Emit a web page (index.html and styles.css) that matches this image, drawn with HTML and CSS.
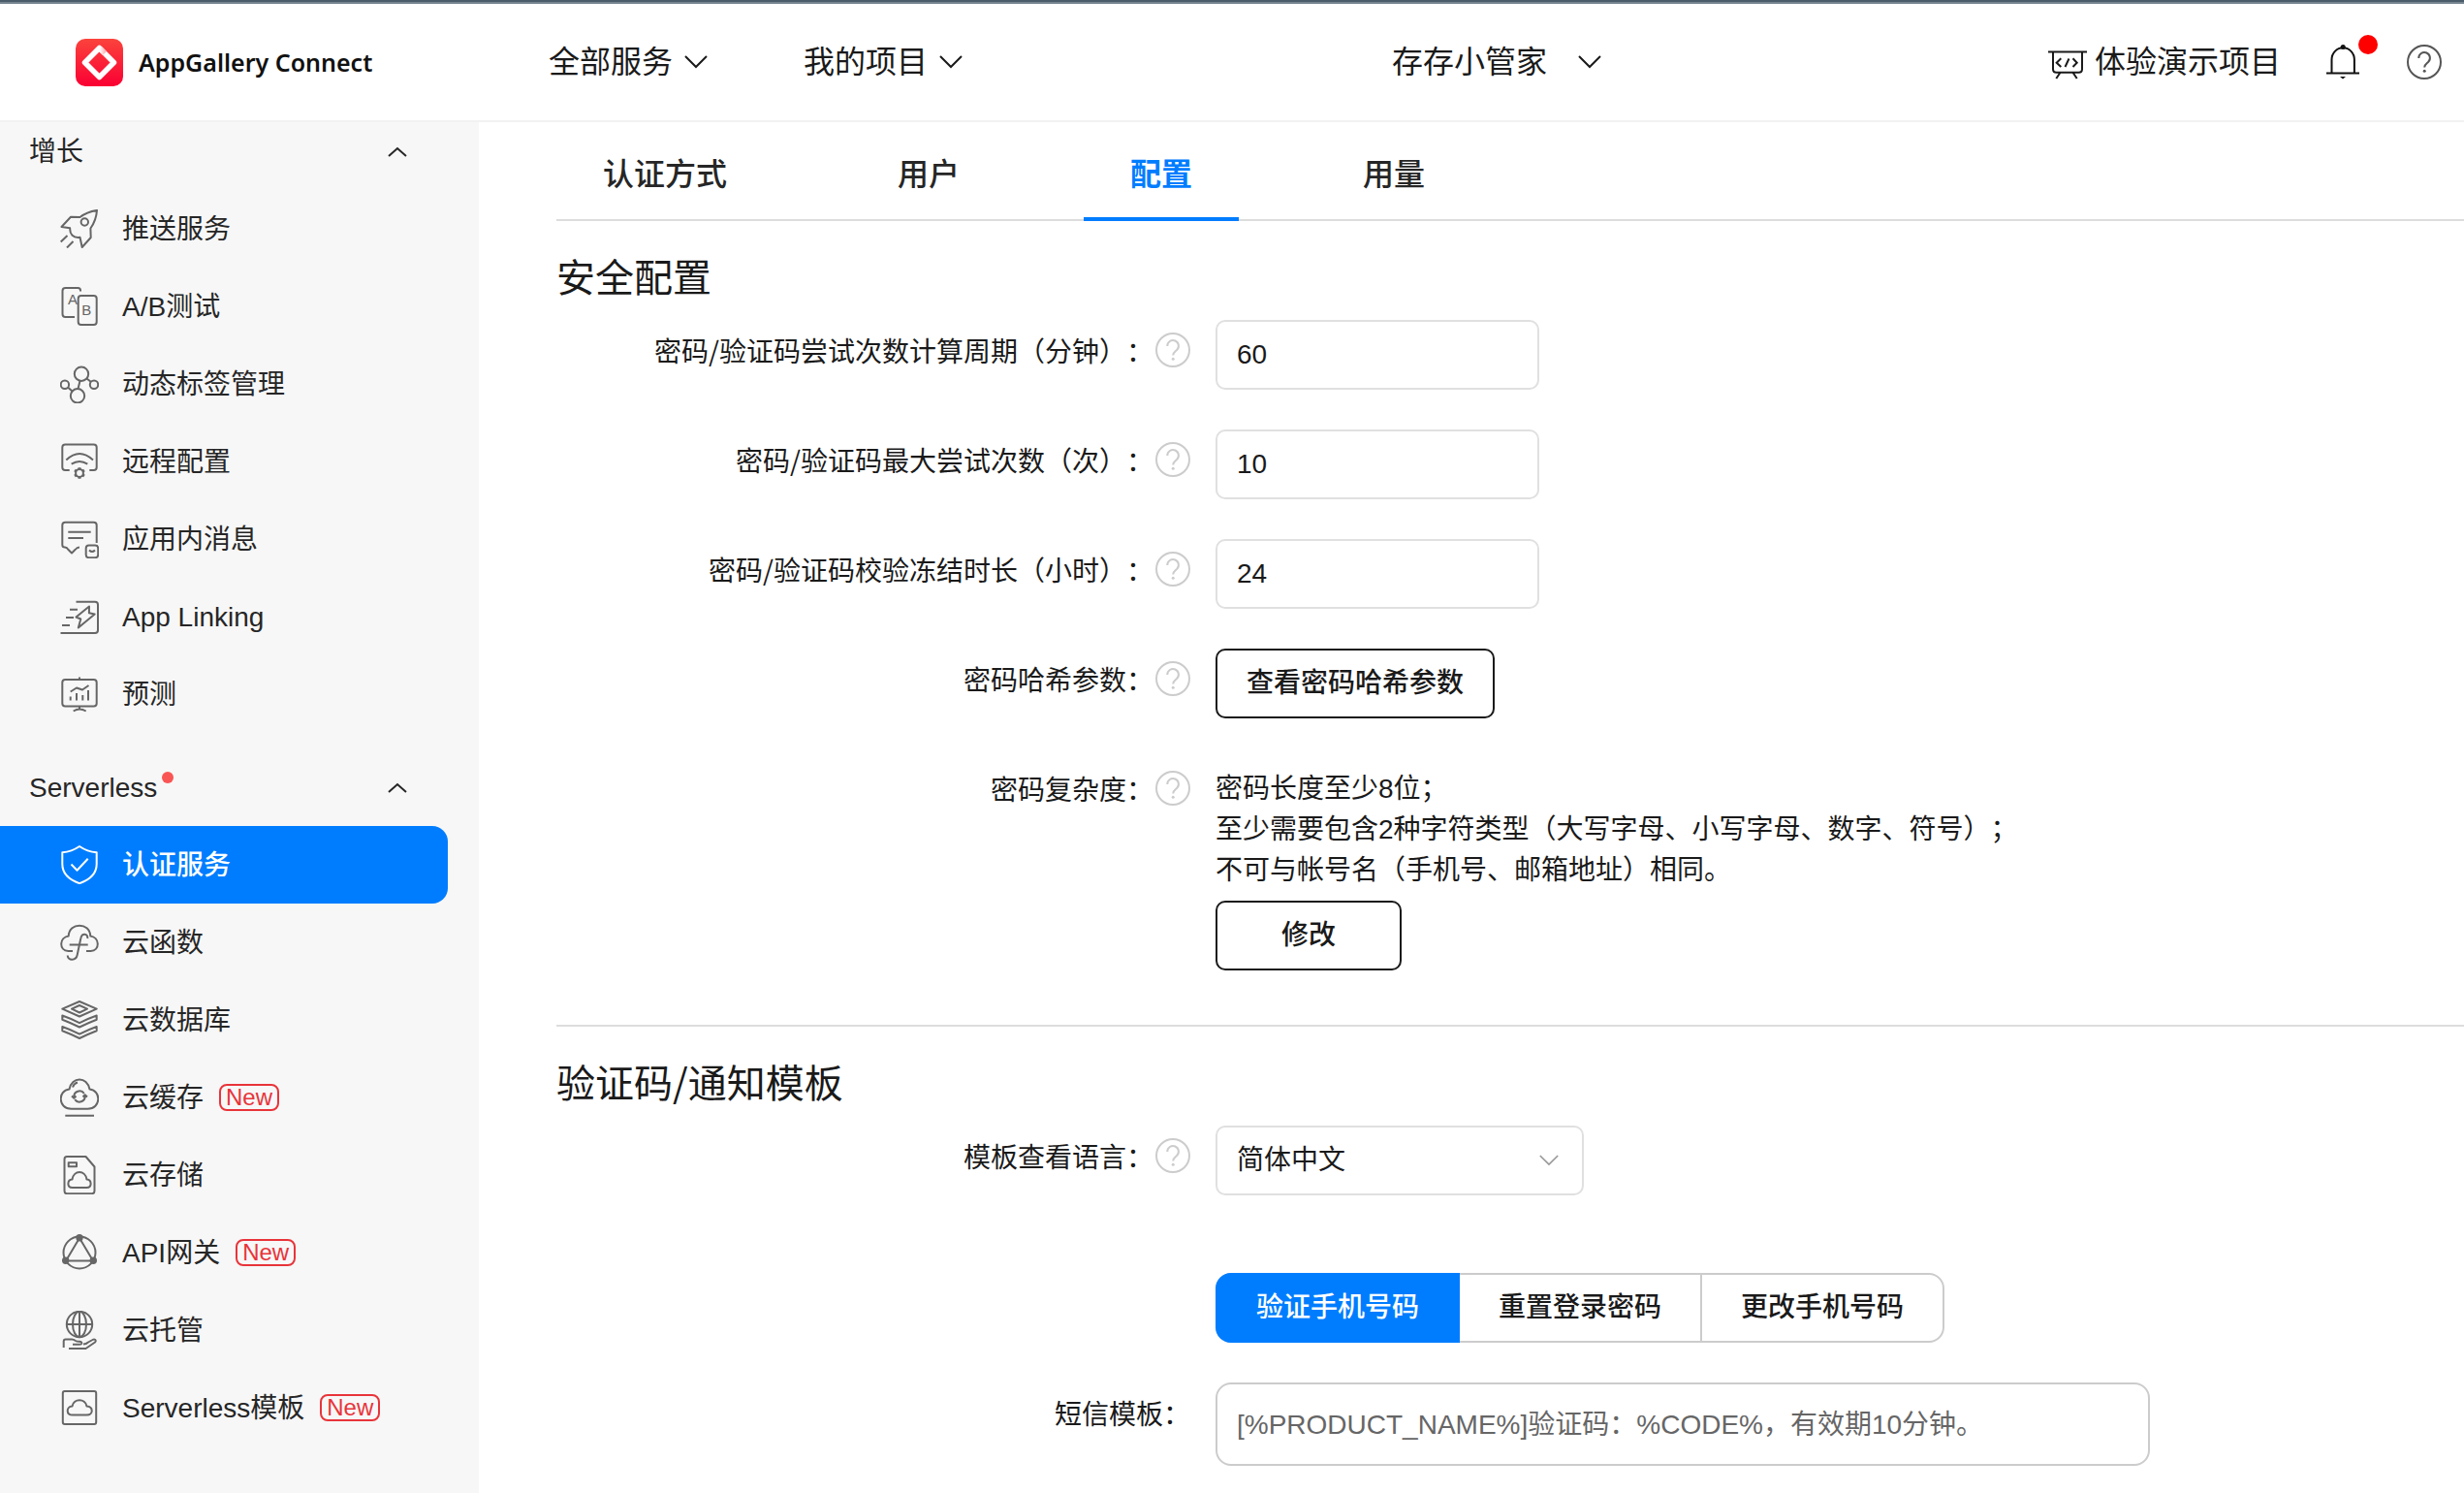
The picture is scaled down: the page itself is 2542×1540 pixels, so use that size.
FILE: index.html
```html
<!DOCTYPE html>
<html lang="zh-CN">
<head>
<meta charset="utf-8">
<title>AppGallery Connect</title>
<link rel="stylesheet" href="styles.css">
</head>
<body>
<svg class="sprite" aria-hidden="true">
  <symbol id="chevron-down" viewBox="0 0 24 14"><path d="M1 1l11 11L23 1"/></symbol>
  <symbol id="chevron-up" viewBox="0 0 20 12"><path d="M1 10l9-8 9 8"/></symbol>
  <symbol id="help" viewBox="0 0 36 36"><circle cx="18" cy="18" r="17"/><path d="M12.3 14a5.8 5.8 0 1 1 9.6 4.2c-2.3 2-3.7 2.700-3.700 5.300"/><circle class="dot" cx="18.200" cy="27.300" r="1.500"/></symbol>
</svg>

<header class="header">
  <a class="brand" href="#">
    <svg class="brand-logo" viewBox="0 0 49 49">
      <defs>
        <linearGradient id="logo-red" x1="0" y1="0" x2="0" y2="1"><stop offset="0" stop-color="#fb433c"/><stop offset="1" stop-color="#fa0033"/></linearGradient>
        <linearGradient id="logo-fold" x1="0" y1="0" x2="1" y2="0"><stop offset="0" stop-color="#fff"/><stop offset="1" stop-color="#ffb9bd"/></linearGradient>
      </defs>
      <rect width="49" height="49" rx="10" fill="url(#logo-red)"/>
      <path d="M24.500 9.500l15 15-15 15-15-15z" fill="none" stroke="#fff" stroke-width="5.500" stroke-linejoin="round"/>
      <path d="M25 10l5 5" stroke="url(#logo-fold)" stroke-width="5.500" fill="none"/>
    </svg>
    <span>AppGallery Connect</span>
  </a>
  <nav class="header-nav">
    <button class="menu-button" type="button">全部服务<svg class="chevron"><use href="#chevron-down"/></svg></button>
    <button class="menu-button" type="button">我的项目<svg class="chevron"><use href="#chevron-down"/></svg></button>
  </nav>
  <button class="menu-button project-menu" type="button">存存小管家<svg class="chevron"><use href="#chevron-down"/></svg></button>
  <div class="header-tools">
    <a class="demo-link" href="#">
      <svg class="demo-icon" viewBox="0 0 40 30"><path d="M0 1.500h40M5 1.500v17.700q0 3.500 3.500 3.500h23q3.500 0 3.500-3.500V1.500M12.500 22.700L8.300 29M25.500 22.700l4.200 6.300M13.300 8.300l-4.600 4.400 4.600 4.300M21.500 8.500l-4 8.500M25.500 8.300l4.200 4.400-4.200 4.300"/></svg>
      <span>体验演示项目</span>
    </a>
    <button class="icon-button bell" type="button" aria-label="通知">
      <svg viewBox="0 0 36 36"><path d="M1 29.500h34M6.500 29.500V15.500a11.700 12.200 0 0 1 23.400 0v14"/><circle class="dot" cx="18.200" cy="2.500" r="2.500"/><path class="dot" d="M15 33h6l-3 2.500z"/></svg>
      <span class="bell-dot"></span>
    </button>
    <button class="icon-button" type="button" aria-label="帮助"><svg class="header-help"><use href="#help"/></svg></button>
  </div>
</header>

<div class="layout">
  <aside class="sidebar">
    <section class="group">
      <button class="group-title" type="button"><span>增长</span><svg class="group-arrow"><use href="#chevron-up"/></svg></button>
      <a class="item" href="#">
        <svg class="item-icon" viewBox="0 0 40 40"><path d="M38 .9C31 2 25 4.500 20.500 8L11 7.800 1.500 18l8.700 1.300C9.800 25.500 13.500 29.800 20.500 28.800L22.700 39l9-10-.3-9.500C35 14.500 37.500 8 38 .9zM7.500 27L.7 33.500M13.500 33L7 39.500"/><circle cx="25.300" cy="13" r="3.700"/></svg>
        <span>推送服务</span></a>
      <a class="item" href="#">
        <svg class="item-icon" viewBox="0 0 40 40"><path d="M21 4.500V3.500q0-2.500-2.500-2.500h-13Q2.500 1 2.500 4v24q0 3 3 3H15"/><rect x="18.700" y="9" width="19" height="30" rx="3"/><text x="8" y="18">A</text><text x="22.300" y="28.500">B</text></svg>
        <span>A/B测试</span></a>
      <a class="item" href="#">
        <svg class="item-icon" viewBox="0 0 40 40"><circle cx="22" cy="9.700" r="7.200"/><circle cx="18" cy="32.300" r="7.200"/><circle cx="4.900" cy="20.700" r="4.200"/><circle cx="35" cy="20.700" r="4.200"/><path d="M20.500 17l-2 8M8 23.500l4.500 4M27.500 14.500l4.500 3.500"/></svg>
        <span>动态标签管理</span></a>
      <a class="item" href="#">
        <svg class="item-icon" viewBox="0 0 40 40"><path d="M9.700 29H5.300q-3 0-3-3V5.500q0-3 3-3h29.400q3 0 3 3V26q0 3-3 3h-4.400M6.300 18.500q13.700-13 27.700 0M11.700 22.700q8.300-5.500 16.600 0"/><circle cx="20" cy="32" r="3.900"/><path stroke-width="3" d="M20 28.500v-2.300M20 35.500v2.300M23 30.200l2-1.200M23 33.800l2 1.200M17 30.200l-2-1.200M17 33.800l-2 1.200"/></svg>
        <span>远程配置</span></a>
      <a class="item" href="#">
        <svg class="item-icon" viewBox="0 0 40 40"><path d="M37.700 24V5.700q0-3-3-3H5.300q-3 0-3 3V26q0 2.500 2.700 2.500 2 .2 3.500 2.500l3.500 3.500 3.500-3.500q2-2.500 4.500-2.500M8.300 12.700h23.400M8.300 19H24"/><rect x="26.700" y="26.500" width="12.500" height="12.700" rx="3"/><path d="M30 31.500q3 3 6 0"/></svg>
        <span>应用内消息</span></a>
      <a class="item" href="#">
        <svg class="item-icon" viewBox="0 0 40 40"><path d="M16.500 4.700H36q3 0 3 3V34q0 3-3 3H.500M10 12.700h8M6 21h8M2 29h8M30 9.500L16.500 20.500l4.800 2-2.500 9L35.700 17.500l-5.800-1.300z"/></svg>
        <span>App Linking</span></a>
      <a class="item" href="#">
        <svg class="item-icon" viewBox="0 0 40 40"><rect x="2.300" y="5" width="35.400" height="27.500" rx="3"/><path d="M20 2.500V5M20 32.500v3M13.700 37.500q6.300-4 13 0M10.700 22.500v4M17 19v7.500M23.300 21v5.500M29 16v10.500M10.700 17.500l6.300-4 6 2 6.500-4.500"/></svg>
        <span>预测</span></a>
    </section>

    <section class="group">
      <button class="group-title" type="button"><span class="has-dot">Serverless</span><svg class="group-arrow"><use href="#chevron-up"/></svg></button>
      <a class="item active" href="#" aria-current="page">
        <svg class="item-icon" viewBox="0 0 40 40"><path d="M20 1q8 5.500 17.700 6.300v12Q37.700 33 20 39.200 2.300 33 2.300 19.300v-12Q12 6.500 20 1zM11.500 19.500l6 6.200 11.200-12"/></svg>
        <span>认证服务</span></a>
      <a class="item" href="#">
        <svg class="item-icon" viewBox="0 0 40 40"><path d="M13 29H8.500C-1.500 28.500-1 15 8.700 13.500 9.500-1 30.500-1 31.300 13.500 41 15 41.500 28.500 31.500 29H27M28.300 16c.7-5.500-6-6-7 0l-3.600 17c-1.200 6-9.700 6.500-10 .5M9.700 22.500h19"/></svg>
        <span>云函数</span></a>
      <a class="item" href="#">
        <svg class="item-icon" viewBox="0 0 40 40"><path d="M20 1l17.700 7.700L20 16.500 2.300 8.700zM20 5l8 3.700-8 3.800-8-3.800zM2.300 15.500q8.700 3 17.700 7.700 9-4.700 17.700-7.700v4.200Q29 23 20 27.500 11 23 2.300 19.700zM2.300 27q8.700 3 17.700 7.700 9-4.700 17.700-7.700v4.200Q29 34.500 20 39 11 34.500 2.300 31.200z"/></svg>
        <span>云数据库</span></a>
      <a class="item" href="#">
        <svg class="item-icon" viewBox="0 0 40 40"><path d="M11.500 31.700C-2.500 31.700-2.500 12.500 9.500 11.500 12-2 28-2 30.500 11.500 42.500 12.500 42.500 31.700 28.500 31.700zM5.300 38.700H35M13 9.500q1.300-4 5-5"/><path d="M14.300 19.500a5.800 5.800 0 0 1 10.500-3.700M25.700 18.500a5.800 5.800 0 0 1-10.500 3.700M12 18.500l2.300 2.200 2.200-2.200M28 19.500l-2.300-2.200-2.200 2.200"/></svg>
        <span>云缓存</span><span class="new-tag">New</span></a>
      <a class="item" href="#">
        <svg class="item-icon" viewBox="0 0 40 40"><path d="M7 1h19.500l9 10.500V36.500q0 2.700-2.700 2.700H7q-2.500 0-2.500-2.700V3.700Q4.500 1 7 1zM8.700 7.200h8.300v4H8.700zM12.500 33C7 33 7 25 12.500 24.500 14 14.500 26 14.500 27.500 24.500 33 25 33 33 27.500 33z"/></svg>
        <span>云存储</span></a>
      <a class="item" href="#">
        <svg class="item-icon" viewBox="0 0 40 40"><circle cx="20" cy="20" r="16.500"/><path d="M20 5L6 28.500h28z"/><circle class="dot" cx="20" cy="4.700" r="3.700"/><circle class="dot" cx="5.700" cy="28.300" r="3.700"/><circle class="dot" cx="34.300" cy="28.300" r="3.700"/></svg>
        <span>API网关</span><span class="new-tag">New</span></a>
      <a class="item" href="#">
        <svg class="item-icon" viewBox="0 0 40 40"><circle cx="20" cy="14" r="13.200"/><path d="M20 .8v26.400M6.800 14h26.400"/><ellipse cx="20" cy="14" rx="7" ry="13.200"/><path d="M3.700 38v-6.500q0-2 2-2H12q2 0 4 1.500 1 .7 4 .7 2.500.3 2.300 2-.2 1-2.300 1h-7M9 39h17.500l9.500-6.500q1.500-1.500 0-2.800-1-.7-2.500.3L29 32.500q-2 2-5 2"/></svg>
        <span>云托管</span></a>
      <a class="item" href="#">
        <svg class="item-icon" viewBox="0 0 40 40"><rect x="2.800" y="3" width="34.400" height="34" rx="2"/><path d="M13 27.500C6 27.500 6 19 12.500 18.500 14 10 26 10 27.500 18.500 34.500 19 34.500 27.500 27.500 27.500z"/></svg>
        <span>Serverless模板</span><span class="new-tag">New</span></a>
    </section>
  </aside>

  <main class="content">
    <nav class="tabs">
      <button class="tab" type="button">认证方式</button>
      <button class="tab" type="button">用户</button>
      <button class="tab selected" type="button">配置</button>
      <button class="tab" type="button">用量</button>
    </nav>

    <section class="panel">
      <h2>安全配置</h2>
      <div class="rows">
        <div class="row">
          <div class="row-label"><label for="period">密码/验证码尝试次数计算周期（分钟）：</label><svg class="help-icon"><use href="#help"/></svg></div>
          <input class="field" id="period" type="text" value="60">
        </div>
        <div class="row">
          <div class="row-label"><label for="attempts">密码/验证码最大尝试次数（次）：</label><svg class="help-icon"><use href="#help"/></svg></div>
          <input class="field" id="attempts" type="text" value="10">
        </div>
        <div class="row">
          <div class="row-label"><label for="freeze">密码/验证码校验冻结时长（小时）：</label><svg class="help-icon"><use href="#help"/></svg></div>
          <input class="field" id="freeze" type="text" value="24">
        </div>
        <div class="row">
          <div class="row-label"><span>密码哈希参数：</span><svg class="help-icon"><use href="#help"/></svg></div>
          <button class="button" type="button">查看密码哈希参数</button>
        </div>
        <div class="row">
          <div class="row-label"><span>密码复杂度：</span><svg class="help-icon"><use href="#help"/></svg></div>
          <div class="rules">
            <p>密码长度至少8位；<br>至少需要包含2种字符类型（大写字母、小写字母、数字、符号）；<br>不可与帐号名（手机号、邮箱地址）相同。</p>
            <button class="button" type="button">修改</button>
          </div>
        </div>
      </div>
    </section>

    <section class="panel divided">
      <h2>验证码/通知模板</h2>
      <div class="rows">
        <div class="row">
          <div class="row-label"><label for="language">模板查看语言：</label><svg class="help-icon"><use href="#help"/></svg></div>
          <div class="select">
            <select id="language"><option>简体中文</option></select>
            <svg class="select-arrow"><use href="#chevron-down"/></svg>
          </div>
        </div>
        <div class="row segments-row">
          <div class="segments">
            <button class="segment selected" type="button">验证手机号码</button>
            <button class="segment" type="button">重置登录密码</button>
            <button class="segment" type="button">更改手机号码</button>
          </div>
        </div>
        <div class="row">
          <div class="row-label"><label for="sms">短信模板：</label></div>
          <input class="template" id="sms" type="text" readonly value="[%PRODUCT_NAME%]验证码：%CODE%，有效期10分钟。">
        </div>
      </div>
    </section>
  </main>
</div>
</body>
</html>
```
FILE: styles.css
```css
* { box-sizing: border-box; }

body {
  margin: 0;
  min-height: 100vh;
  display: flex;
  flex-direction: column;
  background: #fff;
  color: #1a1a1a;
  font: 28px/40px "Liberation Sans", "Noto Sans CJK SC", sans-serif;
  text-spacing-trim: space-all;
}

a { color: inherit; text-decoration: none; }
button, input, select { font: inherit; color: inherit; margin: 0; text-spacing-trim: inherit; }
button { border: 0; padding: 0; background: none; cursor: pointer; }
svg { display: block; flex: none; fill: none; stroke: currentColor; stroke-width: 2; }
.dot { fill: currentColor; stroke: none; }
.sprite { position: absolute; width: 0; height: 0; }

/* Header */
.header {
  display: flex;
  align-items: center;
  height: 126px;
  padding: 4px 23px 0 78px;
  border-bottom: 2px solid #f2f2f2;
  background: linear-gradient(#4a5c6a 0 2px, #75848e 2px 4px, #fff 4px);
}
.brand {
  display: flex;
  align-items: center;
  gap: 16px;
  width: 488px;
  color: #111;
  font: 600 25px/40px "Noto Sans", sans-serif;
}
.brand-logo { width: 49px; height: 49px; stroke: none; }
.header-nav { display: flex; gap: 99px; }
.menu-button { display: flex; align-items: center; gap: 12px; font-size: 32px; }
.chevron { width: 24px; height: 14px; }
.project-menu { margin-left: 443px; gap: 32px; }
.header-tools { display: flex; align-items: center; margin-left: auto; }
.demo-link { display: flex; align-items: center; gap: 8px; font-size: 32px; margin-right: 46px; }
.demo-icon { width: 40px; height: 30px; margin-top: 6px; }
.icon-button { position: relative; width: 36px; height: 36px; }
.bell { margin-right: 48px; color: #111; }
.bell-dot {
  position: absolute;
  top: -10px;
  right: -18px;
  width: 20px;
  height: 20px;
  border-radius: 50%;
  background: #f00;
}
.icon-button svg { width: 36px; height: 36px; }
.header-help { color: #555; }

/* Sidebar */
.layout { display: flex; flex: 1; }
.sidebar { flex: none; width: 494px; background: #f7f7f7; color: #262626; }
.group + .group { margin-top: 26px; }
.group-title {
  display: flex;
  align-items: center;
  justify-content: space-between;
  width: 100%;
  padding: 11px 74px 19px 30px;
}
.group-arrow { width: 20px; height: 12px; }
.has-dot { position: relative; }
.has-dot::after {
  content: "";
  position: absolute;
  top: 3px;
  right: -17px;
  width: 12px;
  height: 12px;
  border-radius: 50%;
  background: #fa5555;
}
.item {
  display: flex;
  align-items: center;
  height: 80px;
  margin-right: 32px;
  padding-left: 62px;
}
.item > span:first-of-type { padding-top: 2px; }
.item-icon { width: 40px; height: 40px; margin-right: 24px; color: #666; stroke-linejoin: round; }
.item-icon text { font-size: 15px; fill: #666; stroke: none; }
.item.active { border-radius: 0 16px 16px 0; background: #007dff; color: #fff; font-weight: 500; }
.item.active .item-icon { color: #fff; }
.new-tag {
  margin-left: 16px;
  padding: 0 5px;
  border: 2px solid #e8343a;
  border-radius: 8px;
  color: #e8343a;
  font-size: 24px;
  line-height: 24px;
}

/* Content */
.content { flex: 1; min-width: 0; padding-left: 80px; }
.tabs { display: flex; gap: 80px; height: 102px; padding-top: 10px; box-shadow: inset 0 -2px #ddd; }
.tab {
  padding: 0 48px;
  border-bottom: 4px solid transparent;
  color: #262626;
  font-size: 32px;
  font-weight: 500;
}
.tab.selected { border-color: #007dff; color: #007dff; font-weight: 700; }

.panel { padding-bottom: 56px; }
.divided { border-top: 2px solid #ddd; }
.panel h2 {
  margin: 0;
  padding: 26px 0 16px;
  font: 400 40px/60px "Noto Sans CJK SC", sans-serif;
}
.rows { display: flex; flex-direction: column; gap: 41px; }
.row { display: flex; align-items: flex-start; }
.row-label {
  display: flex;
  align-items: center;
  justify-content: flex-end;
  gap: 2px;
  flex: none;
  width: 680px;
  padding-right: 26px;
  font-family: "Noto Sans CJK SC", sans-serif;
  line-height: 62px;
}
.help-icon { width: 36px; height: 36px; color: #ccc; }
.field, .select select {
  height: 72px;
  padding: 0 20px;
  border: 2px solid #e0e0e0;
  border-radius: 10px;
  background: #fff;
}
.field { width: 334px; }
.button {
  height: 72px;
  min-width: 192px;
  padding: 0 30px;
  border: 2px solid #1a1a1a;
  border-radius: 10px;
  font-weight: 500;
}
.rules p { margin: 0 0 10px; padding-top: 11px; line-height: 42px; }
.select { display: grid; align-items: center; width: 380px; }
.select select, .select-arrow { grid-area: 1 / 1; }
.select select { width: 100%; appearance: none; }
.select-arrow { justify-self: end; width: 20px; height: 12px; margin-right: 26px; color: #999; pointer-events: none; }
.segments-row { padding: 39px 0 0 680px; }
.segments { display: flex; border: 2px solid #ccc; border-radius: 16px; }
.segment { height: 68px; padding: 0 40px; font-weight: 500; }
.segment + .segment { border-left: 2px solid #ccc; }
.segment.selected { margin: -2px 0 -2px -2px; height: 72px; padding: 0 42px; border-radius: 16px 0 0 16px; background: #007dff; color: #fff; }
.segment.selected + .segment { border-left: 0; }
.template {
  width: 964px;
  height: 86px;
  padding: 0 20px 4px;
  border: 2px solid #ccc;
  border-radius: 16px;
  color: #666;
}
```
